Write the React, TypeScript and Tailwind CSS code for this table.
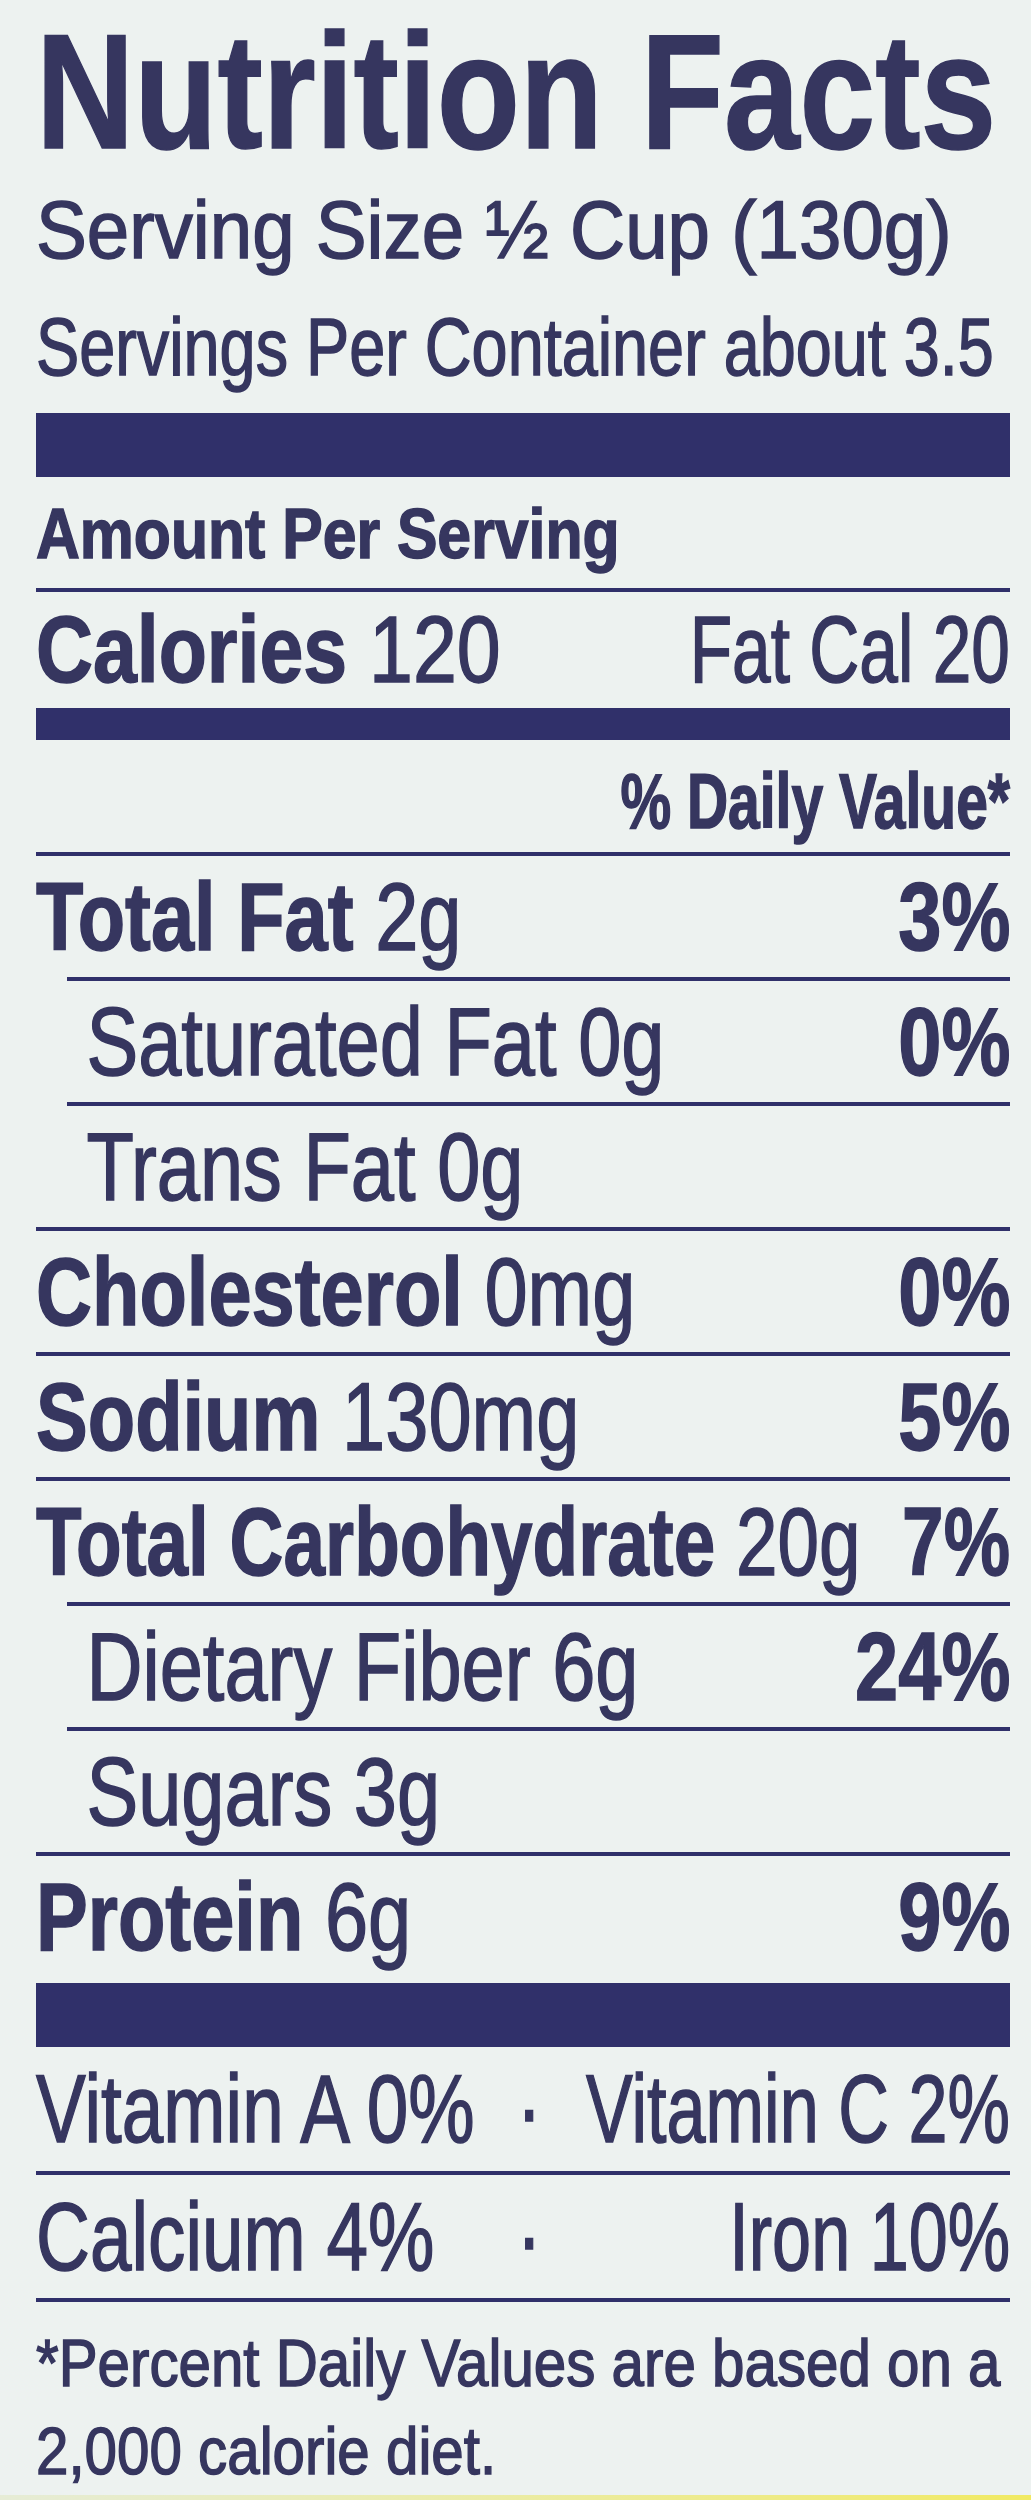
const FONT = "font-[family-name:'Liberation_Sans',Arial,sans-serif]";

interface Nutrient {
  name: string;
  amount: string;
  dv?: string;
  bold?: boolean;
  indent?: boolean;
  ruleIndent?: boolean;
  tight?: boolean;
  last?: boolean;
}

const NUTRIENTS: Nutrient[] = [
  { name: "Total Fat", amount: "2g", dv: "3%", bold: true, ruleIndent: true },
  { name: "Saturated Fat", amount: "0g", dv: "0%", indent: true, ruleIndent: true },
  { name: "Trans Fat", amount: "0g", indent: true },
  { name: "Cholesterol", amount: "0mg", dv: "0%", bold: true },
  { name: "Sodium", amount: "130mg", dv: "5%", bold: true },
  { name: "Total Carbohydrate", amount: "20g", dv: "7%", bold: true, ruleIndent: true, tight: true },
  { name: "Dietary Fiber", amount: "6g", dv: "24%", indent: true, ruleIndent: true },
  { name: "Sugars", amount: "3g", indent: true },
  { name: "Protein", amount: "6g", dv: "9%", bold: true, last: true },
];

function Rule({ indent }: { indent?: boolean }) {
  return <div className={`h-[4px] bg-[#30306a] ${indent ? "ml-[31px]" : ""}`} />;
}

// label type is condensed: rows are laid out wide, then squeezed horizontally
function NutrientRow({ n }: { n: Nutrient }) {
  const squeeze = n.tight ? "w-[1265px] scale-x-[0.77]" : "w-[1218px] scale-x-[0.8]";
  return (
    <>
      <div
        className={`flex h-[121px] origin-left items-start justify-between whitespace-nowrap text-[97px] leading-[121px] ${squeeze} ${
          n.indent ? "pl-[63px]" : ""
        }`}
      >
        <span>
          <span className={n.bold ? "font-bold" : ""}>{n.name}</span> {n.amount}
        </span>
        {n.dv && <span className="font-bold">{n.dv}</span>}
      </div>
      {!n.last && <Rule indent={n.ruleIndent} />}
    </>
  );
}

export default function App() {
  return (
    <div
      className={`flex min-h-[2500px] w-[1031px] flex-col overflow-hidden bg-[#edf2f0] text-[#36365f] [-webkit-text-stroke:1.5px_#36365f] ${FONT}`}
    >
      <div className="ml-[36px] w-[974px]">
        {/* Header */}
        <h1 className="w-max origin-left scale-x-[0.835] whitespace-nowrap pt-[22px] text-[163px] font-bold leading-[140px]">
          Nutrition Facts
        </h1>
        <p className="mt-[9px] w-max origin-left scale-x-[0.93] whitespace-nowrap text-[82px] leading-[117px]">
          Serving Size ½ Cup (130g)
        </p>
        <p className="w-max origin-left scale-x-[0.79] whitespace-nowrap text-[82px] leading-[117px]">
          Servings Per Container about 3.5
        </p>

        <div className="mt-[8px] h-[64px] bg-[#30306a]" />

        <p className="mt-[21px] w-max origin-left scale-x-[0.855] whitespace-nowrap text-[71px] font-bold leading-[71px]">
          Amount Per Serving
        </p>
        <div className="mt-[19px]">
          <Rule />
        </div>

        {/* Calories */}
        <div className="mt-[10px] flex w-[1173px] origin-left scale-x-[0.83] justify-between whitespace-nowrap text-[95px] leading-[95px]">
          <span>
            <span className="font-bold">Calories</span> 120
          </span>
          <span className="inline-block origin-right scale-x-[0.88]">Fat Cal 20</span>
        </div>

        <div className="mt-[11px] h-[32px] bg-[#30306a]" />

        <p className="mt-[23px] origin-right scale-x-[0.74] whitespace-nowrap text-right text-[77px] font-bold leading-[77px]">
          % Daily Value*
        </p>
        <div className="mt-[12px]">
          <Rule />
        </div>

        {/* Nutrients */}
        {NUTRIENTS.map((n) => (
          <NutrientRow key={n.name} n={n} />
        ))}

        <div className="mt-[6px] h-[64px] bg-[#30306a]" />

        {/* Vitamins & minerals */}
        <div className="grid h-[124px] w-[1265px] origin-left scale-x-[0.77] grid-cols-[1fr_auto_1fr] whitespace-nowrap text-[97px] leading-[124px]">
          <span>Vitamin A 0%</span>
          <span className="pl-[36px] pr-[20px]">·</span>
          <span className="justify-self-end">
            <span className="inline-block origin-right scale-x-[0.94]">Vitamin C 2%</span>
          </span>
        </div>
        <Rule />
        <div className="grid h-[123px] w-[1265px] origin-left scale-x-[0.77] grid-cols-[1fr_auto_1fr] whitespace-nowrap text-[97px] leading-[123px]">
          <span>Calcium 4%</span>
          <span className="pl-[36px] pr-[20px]">·</span>
          <span className="justify-self-end">
            <span className="inline-block origin-right scale-x-[0.94]">Iron 10%</span>
          </span>
        </div>
        <Rule />

        {/* Footnote */}
        <p className="mt-[17px] w-max origin-left scale-x-[0.87] whitespace-nowrap text-[67px] leading-[88px]">
          *Percent Daily Values are based on a<br />
          2,000 calorie diet.
        </p>
      </div>
      <div className="mt-auto h-[5px] bg-gradient-to-r from-[#e6ecd6] to-[#f1ea62]" />
    </div>
  );
}
